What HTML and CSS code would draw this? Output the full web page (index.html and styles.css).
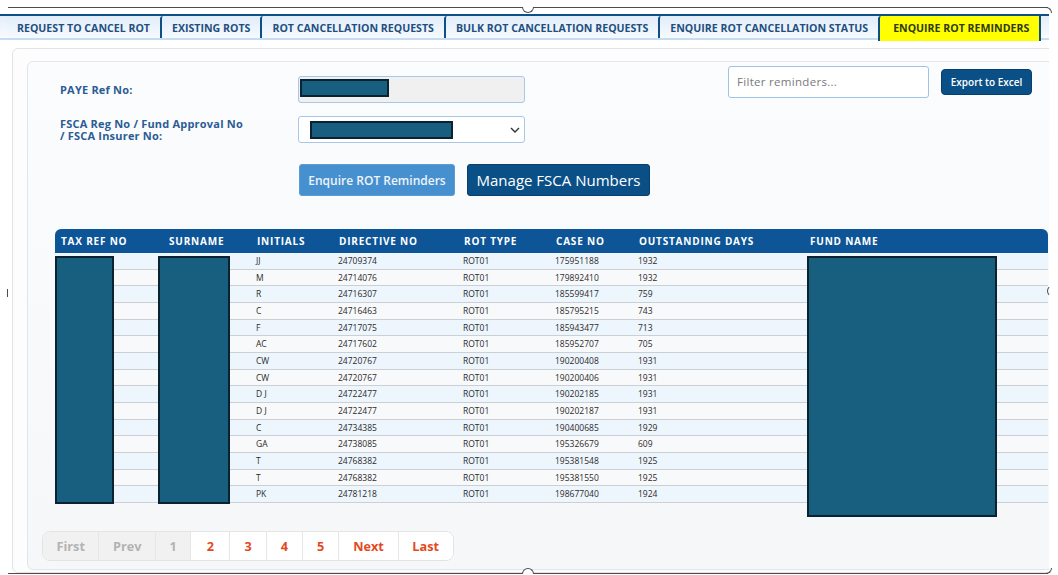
FILE: index.html
```html
<!DOCTYPE html>
<html lang="en">
<head>
<meta charset="utf-8">
<title>Enquire ROT Reminders</title>
<link rel="stylesheet" href="styles.css">
</head>
<body>
<div class="page">
  <div class="clip">
    <nav class="tabs">
      <div class="tab">REQUEST TO CANCEL ROT</div>
      <div class="tab">EXISTING ROTS</div>
      <div class="tab">ROT CANCELLATION REQUESTS</div>
      <div class="tab">BULK ROT CANCELLATION REQUESTS</div>
      <div class="tab">ENQUIRE ROT CANCELLATION STATUS</div>
      <div class="tab active">ENQUIRE ROT REMINDERS</div>
    </nav>
    <div class="outer">
      <div class="inner">
        <div class="top">
          <div class="form">
            <div class="row">
              <label class="lbl">PAYE Ref No:</label>
              <div class="field disabled"><span class="redact r-paye"></span></div>
            </div>
            <div class="row row2">
              <label class="lbl">FSCA Reg No / Fund Approval No<br>/ FSCA Insurer No:</label>
              <div class="field select"><span class="redact r-fsca"></span>
                <svg class="chev" width="10" height="6" viewBox="0 0 10 6"><path d="M1 1 L5 5 L9 1" fill="none" stroke="#333" stroke-width="1.4"/></svg>
              </div>
            </div>
            <div class="actions">
              <button class="btn btn-light">Enquire ROT Reminders</button>
              <button class="btn btn-dark btn-big">Manage FSCA Numbers</button>
            </div>
          </div>
          <div class="tools">
            <div class="filter">Filter reminders...</div>
            <button class="btn btn-dark btn-small">Export to Excel</button>
          </div>
        </div>

        <div class="table-wrap">
          <table class="grid">
            <thead>
              <tr>
                <th class="c1">TAX REF NO</th>
                <th class="c2">SURNAME</th>
                <th class="c3">INITIALS</th>
                <th class="c4">DIRECTIVE NO</th>
                <th class="c5">ROT TYPE</th>
                <th class="c6">CASE NO</th>
                <th class="c7">OUTSTANDING DAYS</th>
                <th class="c8">FUND NAME</th>
              </tr>
            </thead>
            <tbody>
              <tr><td></td><td></td><td>JJ</td><td>24709374</td><td>ROT01</td><td>175951188</td><td>1932</td><td></td></tr>
              <tr><td></td><td></td><td>M</td><td>24714076</td><td>ROT01</td><td>179892410</td><td>1932</td><td></td></tr>
              <tr><td></td><td></td><td>R</td><td>24716307</td><td>ROT01</td><td>185599417</td><td>759</td><td></td></tr>
              <tr><td></td><td></td><td>C</td><td>24716463</td><td>ROT01</td><td>185795215</td><td>743</td><td></td></tr>
              <tr><td></td><td></td><td>F</td><td>24717075</td><td>ROT01</td><td>185943477</td><td>713</td><td></td></tr>
              <tr><td></td><td></td><td>AC</td><td>24717602</td><td>ROT01</td><td>185952707</td><td>705</td><td></td></tr>
              <tr><td></td><td></td><td>CW</td><td>24720767</td><td>ROT01</td><td>190200408</td><td>1931</td><td></td></tr>
              <tr><td></td><td></td><td>CW</td><td>24720767</td><td>ROT01</td><td>190200406</td><td>1931</td><td></td></tr>
              <tr><td></td><td></td><td>D J</td><td>24722477</td><td>ROT01</td><td>190202185</td><td>1931</td><td></td></tr>
              <tr><td></td><td></td><td>D J</td><td>24722477</td><td>ROT01</td><td>190202187</td><td>1931</td><td></td></tr>
              <tr><td></td><td></td><td>C</td><td>24734385</td><td>ROT01</td><td>190400685</td><td>1929</td><td></td></tr>
              <tr><td></td><td></td><td>GA</td><td>24738085</td><td>ROT01</td><td>195326679</td><td>609</td><td></td></tr>
              <tr><td></td><td></td><td>T</td><td>24768382</td><td>ROT01</td><td>195381548</td><td>1925</td><td></td></tr>
              <tr><td></td><td></td><td>T</td><td>24768382</td><td>ROT01</td><td>195381550</td><td>1925</td><td></td></tr>
              <tr><td></td><td></td><td>PK</td><td>24781218</td><td>ROT01</td><td>198677040</td><td>1924</td><td></td></tr>
            </tbody>
          </table>
          <span class="redact r-tax"></span>
          <span class="redact r-surname"></span>
          <span class="redact r-fund"></span>
        </div>

        <div class="pager">
          <span class="pg off">First</span>
          <span class="pg off">Prev</span>
          <span class="pg off">1</span>
          <span class="pg num first-num">2</span>
          <span class="pg num">3</span>
          <span class="pg num">4</span>
          <span class="pg num">5</span>
          <span class="pg wide">Next</span>
          <span class="pg">Last</span>
        </div>
      </div>
    </div>
  </div>

  <div class="frame">
    <span class="hd hd-top"></span>
    <span class="hd hd-bottom"></span>
    <span class="hd hd-right"></span>
    <span class="hd hd-left"></span>
    <span class="hd hd-tr"></span>
    <span class="hd hd-br"></span>
  </div>
</div>
</body>
</html>
```

FILE: styles.css
```css
* { box-sizing: border-box; }

body {
  margin: 0;
  background: #ffffff;
  font-family: "Open Sans", "Liberation Sans", sans-serif;
  color: #333;
}

.page {
  position: relative;
  width: 1058px;
  height: 575px;
  overflow: hidden;
}

.clip {
  width: 1049px;
  overflow: hidden;
  padding-top: 14px;
}

/* ---------- tabs ---------- */
.tabs {
  display: flex;
  align-items: flex-start;
  padding-left: 7px;
  border-top: 2px solid #0d4f86;
  border-bottom: 2px solid #c6dcf0;
  background: linear-gradient(#e4eefa, #f8fbff);
}

.tab {
  height: 22px;
  display: flex;
  align-items: center;
  padding: 1px 10px 0;
  font-size: 10.6px;
  font-weight: 700;
  color: #1f4f7f;
  white-space: nowrap;
  background: linear-gradient(#e1edf9, #f6faff);
}

.tab + .tab {
  border-left: 2px solid #0d4f86;
  border-top-left-radius: 3px;
}

.tab.active {
  height: 25px;
  margin-bottom: -3px;
  background: #ffff00;
  color: #2e3b12;
  border-right: 2px solid #0d4f86;
  padding-left: 13px;
  padding-bottom: 3px;
}

/* ---------- panels ---------- */
.outer {
  margin: 8px 0 0 12px;
  width: 1060px;
  border: 1px solid #e1e3e6;
  border-radius: 6px;
  background: #fdfdfe;
  padding: 12px 0 2px 14px;
}

.inner {
  border: 1px solid #e2e5ea;
  border-radius: 6px;
  background: linear-gradient(#fbfcfd, #f5f7f9);
  padding: 4px 0 8px 13px;
}

/* ---------- top form ---------- */
.top {
  display: flex;
  width: 991px;
  padding-left: 19px;
}

.form {
  padding-top: 10px;
}

.row {
  display: flex;
  align-items: center;
}

.row2 {
  margin-top: 13px;
}

.lbl {
  width: 238px;
  font-size: 11px;
  font-weight: 700;
  letter-spacing: 0.2px;
  line-height: 12px;
  color: #2b5c95;
}

.field {
  position: relative;
  width: 227px;
  height: 27px;
  border: 1px solid #a9c7e6;
  border-radius: 3px;
  background: #ffffff;
}

.field.disabled {
  background: #f0f0f0;
}

.redact {
  display: block;
  background: #175e7f;
  border: 2px solid #0b2331;
}

.r-paye {
  margin: 2px 0 0 1px;
  width: 89px;
  height: 18px;
}

.r-fsca {
  margin: 4px 0 0 11px;
  width: 143px;
  height: 18px;
}

.chev {
  position: absolute;
  right: 4px;
  top: 10px;
}

.actions {
  display: flex;
  gap: 12px;
  margin: 21px 0 0 239px;
}

.btn {
  font-family: inherit;
  border-radius: 3px;
  color: #ffffff;
  cursor: pointer;
}

.btn-light {
  width: 156px;
  height: 32px;
  background: #4790cf;
  border: 1px solid #5b9bd6;
  font-size: 12px;
  font-weight: 600;
  color: #eef4fb;
  padding: 0;
}

.btn-dark {
  background: #0b4f87;
  border: 1px solid #093f6c;
}

.btn-big {
  width: 183px;
  height: 32px;
  font-size: 15px;
  padding: 0;
}

.tools {
  margin-left: auto;
  display: flex;
  align-items: center;
  gap: 12px;
  height: 32px;
}

.filter {
  width: 201px;
  height: 32px;
  border: 1px solid #9fc3e6;
  border-radius: 3px;
  background: #ffffff;
  font-size: 11.5px;
  color: #7a7a7a;
  line-height: 30px;
  padding-left: 8px;
  letter-spacing: 0.3px;
}

.btn-small {
  width: 91px;
  height: 26px;
  font-size: 10px;
  font-weight: 600;
  padding: 0;
  border-radius: 4px;
}

/* ---------- table ---------- */
.table-wrap {
  position: relative;
  margin: 33px 0 0 14px;
  width: 993px;
}

.grid {
  width: 993px;
  border-collapse: separate;
  border-spacing: 0;
  table-layout: fixed;
}

.grid th {
  height: 24px;
  background: #0d5597;
  color: #ffffff;
  font-size: 10px;
  font-weight: 700;
  letter-spacing: 0.8px;
  text-align: left;
  padding: 0 6px;
  white-space: nowrap;
}

.grid th:first-child { border-top-left-radius: 6px; }
.grid th:last-child { border-top-right-radius: 6px; }

.c1 { width: 108px; }
.c2 { width: 88px; }
.c3 { width: 82px; }
.c4 { width: 125px; }
.c5 { width: 92px; }
.c6 { width: 83px; }
.c7 { width: 171px; }

.grid td {
  font-size: 8.5px;
  line-height: 15.67px;
  padding: 0 5px;
  color: #2a2a2a;
  border-bottom: 1px solid #ccd0d4;
  white-space: nowrap;
}

.grid tbody tr:nth-child(odd) td { background: #edf5fd; }
.grid tbody tr:nth-child(even) td { background: #f8f9fb; }

.r-tax, .r-surname, .r-fund {
  position: absolute;
  top: 27px;
}

.r-tax { left: 0; width: 59px; height: 248px; }
.r-surname { left: 103px; width: 72px; height: 248px; }
.r-fund { left: 752px; width: 190px; height: 261px; }

/* ---------- pager ---------- */
.pager {
  display: inline-flex;
  margin: 28px 0 0 1px;
  border: 1px solid #e3e3e3;
  border-radius: 8px;
  overflow: hidden;
  background: #ffffff;
}

.pg {
  padding: 0 13.5px;
  line-height: 28px;
  font-size: 12.7px;
  font-weight: 700;
  color: #e4491d;
  background: #ffffff;
}

.pg.num { padding: 0 14px; }
.pg.first-num { padding: 0 15.5px; }
.pg.wide { padding: 0 14px; }

.pg + .pg { border-left: 1px solid #e6e6e6; }

.pg.off {
  background: #f1f1f1;
  color: #b3b3b3;
}

/* ---------- picture frame overlay ---------- */
.frame {
  position: absolute;
  left: 8px;
  top: 7px;
  width: 1040px;
  height: 567px;
  border-top: 1.5px solid #4d4d4d;
  border-bottom: 1.5px solid #4d4d4d;
  pointer-events: none;
}

.hd { position: absolute; display: block; }

.hd-top {
  left: 514px;
  top: -1px;
  width: 12px;
  height: 6px;
  border: 1.5px solid #4d4d4d;
  border-top: none;
  border-radius: 0 0 6px 6px;
  background: #ffffff;
}

.hd-bottom {
  left: 514px;
  bottom: -1px;
  width: 12px;
  height: 6px;
  border: 1.5px solid #4d4d4d;
  border-bottom: none;
  border-radius: 6px 6px 0 0;
  background: #ffffff;
}

.hd-right {
  left: 1039px;
  top: 277px;
  width: 12px;
  height: 12px;
  border: 1.5px solid transparent;
  border-left-color: #4d4d4d;
  border-radius: 50%;
}

.hd-left {
  left: -1px;
  top: 281px;
  width: 1px;
  height: 8px;
  background: #4d4d4d;
}

.hd-tr {
  right: -4px;
  top: -1px;
  width: 6px;
  height: 6px;
  border-top: 1.5px solid #4d4d4d;
  border-right: 1.5px solid #4d4d4d;
  border-top-right-radius: 6px;
}

.hd-br {
  right: -4px;
  bottom: -1px;
  width: 6px;
  height: 6px;
  border-bottom: 1.5px solid #4d4d4d;
  border-right: 1.5px solid #4d4d4d;
  border-bottom-right-radius: 6px;
}
```
